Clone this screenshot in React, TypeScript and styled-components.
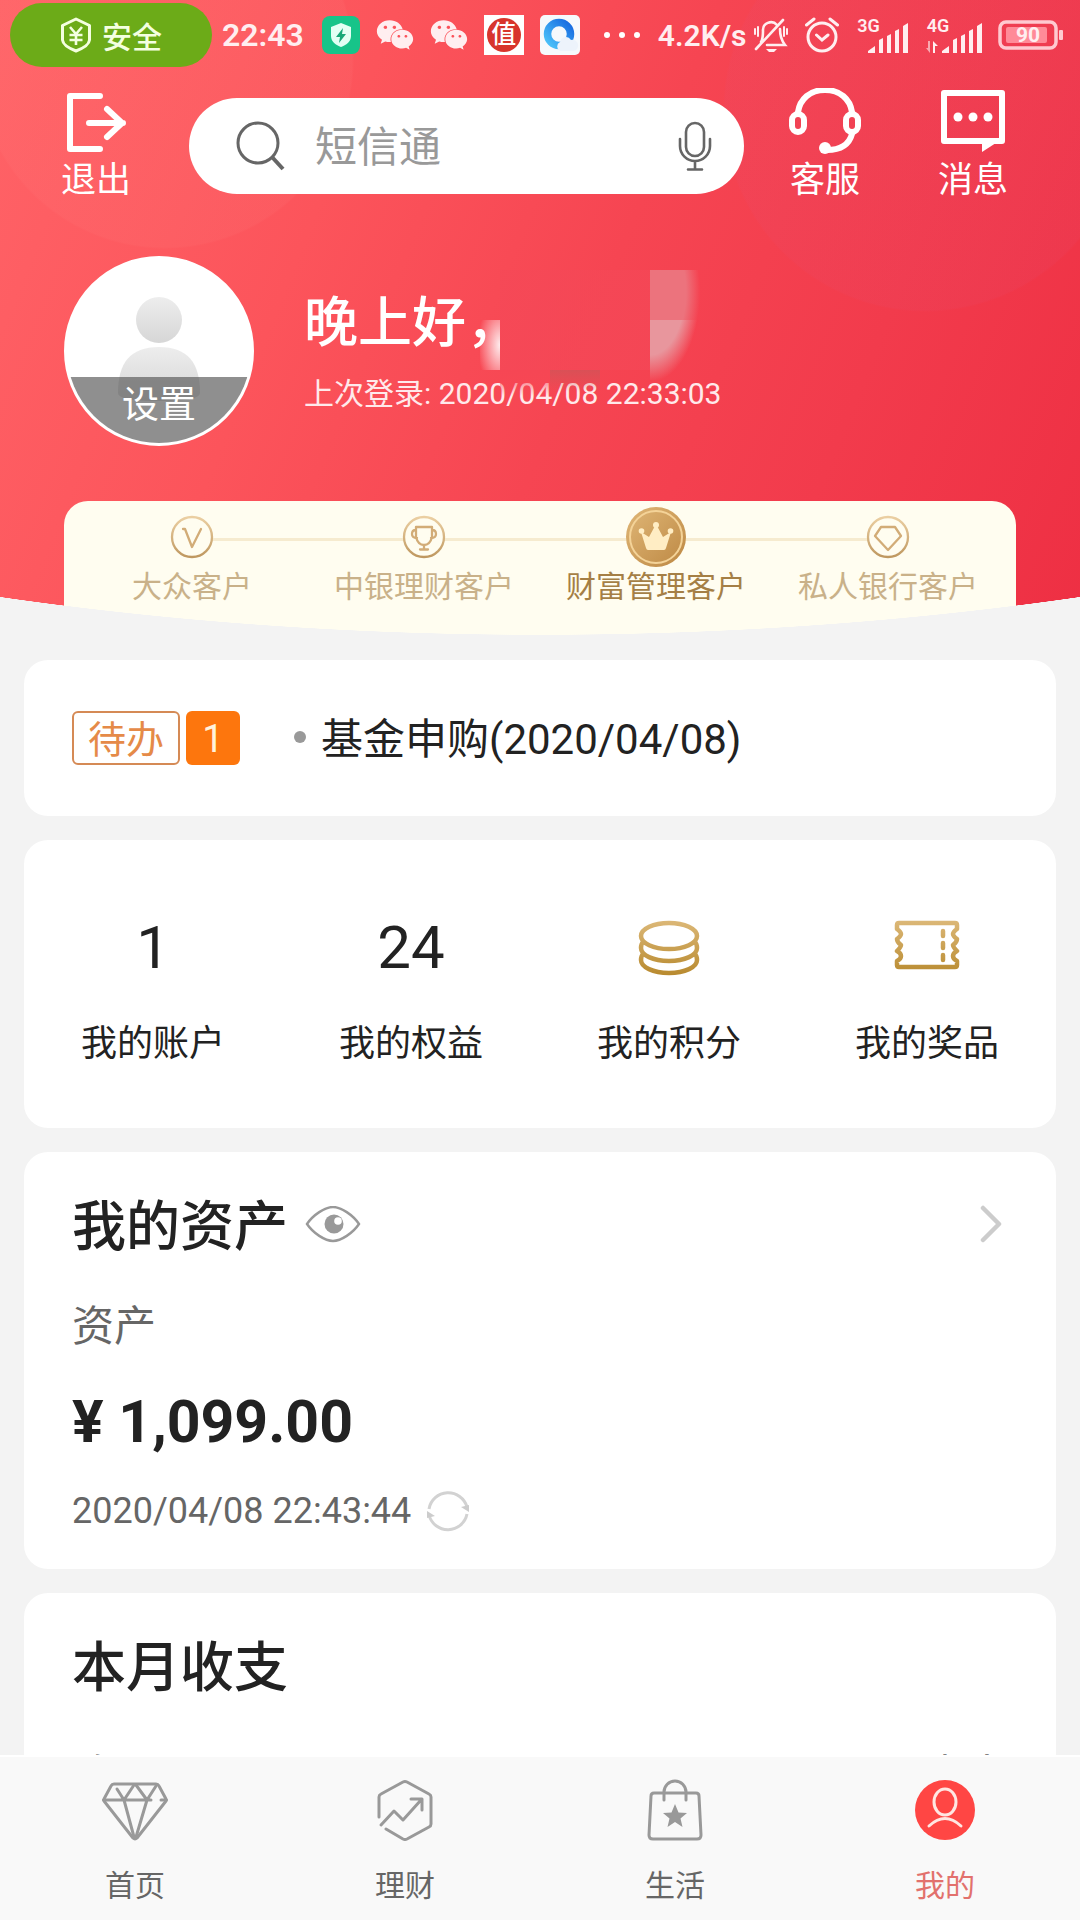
import React from "react";
import styled, { createGlobalStyle } from "styled-components";
import { FaWeixin } from "react-icons/fa";

const GlobalStyle = createGlobalStyle`
  * { box-sizing: border-box; }
  body {
    margin: 0;
    background: #f3f3f3;
    color: #222;
    font-family: Roboto, "Noto Sans CJK SC", sans-serif;
    -webkit-font-smoothing: antialiased;
  }
  button, input { font-family: inherit; }
  button { border: 0; padding: 0; background: none; color: inherit; cursor: pointer; }
  a { color: inherit; text-decoration: none; }
  h1, h2, p, ul { margin: 0; padding: 0; }
  li { list-style: none; }
  svg { display: block; flex: none; }
`;

const Screen = styled.div`
  height: 100vh;
  display: flex;
  flex-direction: column;
`;

const Scroller = styled.div`
  flex: 1;
  min-height: 0;
  overflow-y: auto;
  scrollbar-width: none;
`;

/* ---------- red header ---------- */

const Header = styled.header`
  position: relative;
  color: #fff;
  background:
    radial-gradient(circle at 165px 60px, rgba(255, 130, 130, 0.12) 187px, transparent 189px),
    radial-gradient(circle at 925px 110px, rgba(225, 80, 120, 0.12) 200px, transparent 202px),
    linear-gradient(112deg, #ff6367 0%, #fc545b 30%, #f64552 54%, #f23b4c 76%, #ee2f43 100%);

  /* curved lower edge in the page colour */
  &::after {
    content: "";
    position: absolute;
    inset: auto 0 0;
    height: 42px;
    z-index: 2;
    background: radial-gradient(147% 635px at 50% -593px, transparent calc(100% - 1px), #f3f3f3 100%);
  }
`;

const StatusBar = styled.div`
  height: 70px;
  padding: 0 16px 0 10px;
  display: flex;
  align-items: center;
  color: #ffeef0;
  font-size: 32px;
  font-weight: 600;
`;

const SafePill = styled.div`
  width: 202px;
  height: 64px;
  border-radius: 32px;
  background: #6cab18;
  color: #f4ffe0;
  display: flex;
  align-items: center;
  justify-content: center;
  gap: 10px;
  font-size: 30px;
  font-weight: 500;
`;

const Clock = styled.span`
  margin-left: 10px;
`;

const Speed = styled.span`
  font-size: 30px;
`;

const AppIcons = styled.div`
  margin-left: 18px;
  display: flex;
  align-items: center;
  gap: 16px;
`;

const DealIcon = styled.span`
  width: 40px;
  height: 40px;
  background: #fff;
  display: flex;
  align-items: center;
  justify-content: center;
`;

const DealDisc = styled.span`
  width: 34px;
  height: 34px;
  border-radius: 50%;
  background: #d8352c;
  color: #fff;
  font-size: 25px;
  line-height: 34px;
  font-weight: 500;
  text-align: center;
`;

const Dots = styled.span`
  display: flex;
  gap: 9px;
  margin: 0 18px 0 24px;
  i {
    width: 6px;
    height: 6px;
    border-radius: 50%;
    background: #fff;
  }
`;

const SystemIcons = styled.div`
  flex: 1;
  margin-left: 6px;
  display: flex;
  align-items: center;
  justify-content: space-between;
`;

const Signal = styled.span<{ $width: number }>`
  width: ${(p) => p.$width}px;
  height: 36px;
  position: relative;
  display: block;
  svg { position: absolute; right: 0; bottom: 0; }
`;

const NetLabel = styled.span`
  position: absolute;
  left: 2px;
  top: 0;
  font-size: 18px;
  line-height: 18px;
  font-weight: 600;
`;

const Battery = styled.span`
  position: relative;
  width: 66px;
  height: 30px;
  span {
    position: absolute;
    inset: 0 6px 0 0;
    text-align: center;
    font-size: 21px;
    line-height: 30px;
    font-weight: 700;
  }
`;

const TopRow = styled.div`
  display: flex;
  align-items: center;
  padding: 18px 71px 0 60px;
`;

const IconButton = styled.button`
  width: 72px;
  display: flex;
  flex-direction: column;
  align-items: center;
  color: #fff;
  font-size: 35px;
  line-height: 54px;
`;

const Actions = styled.div`
  display: flex;
  gap: 76px;
`;

const SearchBox = styled.label`
  flex: 1;
  min-width: 0;
  height: 96px;
  margin: 0 45px 4px 57px;
  padding: 0 32px 0 47px;
  border-radius: 48px;
  background: #fff;
  display: flex;
  align-items: center;
  gap: 29px;
`;

const SearchInput = styled.input`
  flex: 1;
  min-width: 0;
  border: 0;
  outline: 0;
  padding: 4px 0 0;
  background: none;
  font-size: 42px;
  line-height: 60px;
  color: #333;
  &::placeholder { color: #999; opacity: 1; }
`;

const Profile = styled.section`
  display: flex;
  align-items: center;
  gap: 50px;
  padding: 48px 64px 0;
`;

const Avatar = styled.button`
  position: relative;
  width: 190px;
  height: 190px;
  border-radius: 50%;
  border: 3px solid #fff;
  background: #fff;
  overflow: hidden;
  flex: none;
`;

const AvatarLabel = styled.span`
  position: absolute;
  inset: auto 0 0;
  height: 66px;
  background: rgba(90, 90, 90, 0.68);
  color: #fff;
  font-size: 37px;
  line-height: 58px;
`;

const Welcome = styled.div`
  position: relative;
  padding-top: 4px;
`;

const Greeting = styled.h1`
  font-size: 54px;
  line-height: 82px;
  font-weight: 500;
`;

const LastLogin = styled.p`
  font-size: 30px;
  line-height: 58px;
  color: #ffe9eb;
`;

/* Pixelated cover over the customer's name */
const NameMask = styled.span`
  position: absolute;
  left: 176px;
  top: -9px;
  width: 220px;
  height: 130px;
  background-repeat: no-repeat;
  background-image:
    radial-gradient(ellipse 28px 56px at 100% 50%, rgba(255, 255, 255, 0.9) 0%, transparent 80%),
    linear-gradient(rgba(205, 85, 88, 0.7), rgba(235, 70, 82, 0)),
    linear-gradient(#f64654, rgba(246, 70, 84, 0)),
    linear-gradient(rgba(244, 72, 88, 0.6), rgba(244, 72, 88, 0.6)),
    radial-gradient(ellipse 50px 90px at 0 22px, #ec737d 72%, transparent 100%),
    radial-gradient(ellipse 50px 90px at 0 -28px, #e8969d 70%, transparent 100%);
  background-size: 20px 50px, 50px 22px, 50px 26px, 150px 100px, 50px 50px, 50px 60px;
  background-position: 0 50px, 70px 100px, 20px 100px, 20px 0, 170px 0, 170px 50px;
`;

const TierCard = styled.ol`
  list-style: none;
  margin: 55px 64px 0;
  padding: 6px 12px 28px;
  border-radius: 24px 24px 0 0;
  background: #fffdf0;
  display: grid;
  grid-template-columns: repeat(4, 1fr);
`;

const Tier = styled.li<{ $active?: boolean }>`
  position: relative;
  display: flex;
  flex-direction: column;
  align-items: center;
  color: ${(p) => (p.$active ? "#a57f45" : "#c9b189")};
  font-size: 30px;
  line-height: 40px;
  white-space: nowrap;
  &:not(:first-child)::before {
    content: "";
    position: absolute;
    top: 31px;
    right: 50%;
    width: 100%;
    height: 3px;
    background: #f6ebcf;
  }
`;

const TierIcon = styled.span`
  height: 60px;
  position: relative;
  z-index: 1;
  display: flex;
  align-items: center;
`;

/* ---------- cards ---------- */

const Cards = styled.main`
  padding: 25px 24px;
  display: flex;
  flex-direction: column;
  gap: 24px;
`;

const Card = styled.section`
  background: #fff;
  border-radius: 24px;
  padding: 34px 48px;
`;

const TodoCard = styled(Card)`
  padding: 46px 48px;
  display: flex;
  align-items: center;
`;

const TodoTag = styled.span`
  height: 54px;
  width: 108px;
  border: 2px solid #d58a55;
  border-radius: 6px;
  color: #e58a48;
  font-size: 38px;
  line-height: 54px;
  text-align: center;
`;

const TodoCount = styled.span`
  width: 54px;
  height: 54px;
  margin-left: 6px;
  border-radius: 6px;
  background: #fd760d;
  color: #fff2dc;
  font-size: 38px;
  line-height: 56px;
  text-align: center;
`;

const TodoLink = styled.a`
  margin-left: 54px;
  padding-top: 4px;
  display: flex;
  align-items: center;
  gap: 15px;
  font-size: 42px;
  line-height: 60px;
  &::before {
    content: "";
    width: 12px;
    height: 12px;
    margin-bottom: 6px;
    border-radius: 50%;
    background: #999;
  }
`;

const StatCard = styled(Card)`
  padding: 74px 0 60px;
  display: grid;
  grid-template-columns: repeat(4, 1fr);
`;

const Stat = styled.a`
  display: flex;
  flex-direction: column;
  align-items: center;
  gap: 42px;
  font-size: 36px;
  line-height: 48px;
`;

const StatValue = styled.span`
  height: 64px;
  font-size: 60px;
  line-height: 68px;
`;

const TitleRow = styled.div`
  display: flex;
  align-items: center;
  justify-content: space-between;
`;

const TitleGroup = styled.div`
  display: flex;
  align-items: center;
  gap: 17px;
`;

const Title = styled.h2`
  padding-top: 6px;
  font-size: 54px;
  line-height: 72px;
  font-weight: 500;
`;

const Caption = styled.p`
  margin-top: 34px;
  font-size: 42px;
  line-height: 58px;
  color: #666;
`;

const Amount = styled.p`
  margin-top: 30px;
  font-size: 59px;
  line-height: 72px;
  font-weight: 700;
`;

const Updated = styled.div`
  margin-top: 29px;
  display: flex;
  align-items: center;
  gap: 16px;
  font-size: 36px;
  line-height: 48px;
  color: #666;
`;

const FlowRow = styled.div`
  margin-top: 42px;
  display: flex;
  justify-content: space-between;
  font-size: 42px;
  line-height: 58px;
  color: #666;
`;

/* ---------- tab bar ---------- */

const TabBar = styled.nav`
  height: 165px;
  flex: none;
  border-top: 2px solid #fff;
  background: #f9f9f9;
  display: grid;
  grid-template-columns: repeat(4, 1fr);
`;

const Tab = styled.a<{ $active?: boolean }>`
  padding-top: 22px;
  display: flex;
  flex-direction: column;
  align-items: center;
  gap: 23px;
  font-size: 30px;
  line-height: 44px;
  color: ${(p) => (p.$active ? "#e2716d" : "#666")};
`;

/* ---------- drawings ---------- */

const ShieldYen = () => (
  <svg width="32" height="36" viewBox="0 0 32 36" fill="none" stroke="currentColor" strokeWidth="3">
    <path d="M16 2 29.5 8.500V23Q29 29 16 34Q3 29 2.500 23V8.500Z" strokeLinejoin="round" />
    <path d="M10 10l6 7 6-7M16 17v11M9.500 18h13M9.500 23h13" strokeWidth="2.600" />
  </svg>
);

const GuardApp = () => (
  <svg width="38" height="38" viewBox="0 0 38 38">
    <rect width="38" height="38" rx="8" fill="#17c489" />
    <path d="M19 7l10 4v9c0 6-5 9-10 11C14 29 9 26 9 20v-9z" fill="#e3fff4" />
    <path d="M21 12l-7 9h4l-1 6 7-9h-4z" fill="#17a878" />
  </svg>
);

const BrowserApp = () => (
  <svg width="40" height="40" viewBox="0 0 40 40">
    <defs>
      <linearGradient id="qb" x1="0" y1="1" x2="1" y2="0">
        <stop offset="0" stopColor="#4cc4fa" />
        <stop offset="1" stopColor="#1769e0" />
      </linearGradient>
    </defs>
    <rect width="40" height="40" rx="5" fill="#f6f9fc" />
    <circle cx="19" cy="19" r="11.500" fill="none" stroke="url(#qb)" strokeWidth="7.500" />
    <path d="M20 36a5 5 0 0 1 0-9 6 6 0 0 1 11-2 5.500 5.500 0 0 1 3 11z" fill="#edf3fb" />
  </svg>
);

const MutedBell = () => (
  <svg width="36" height="36" viewBox="0 0 36 36" fill="none" stroke="currentColor" strokeWidth="2.600" strokeLinecap="round">
    <path d="M8 25c2-3 2-6 2-11a8 8 0 0 1 14-6M27 12c0 7 1 11 5 16H14M3 32 30 3" />
    <path d="M2 12v5M5 10v9M34 12v5M31 10v9" strokeWidth="2" />
    <path d="M13 32h11l-3 3h-5z" fill="currentColor" stroke="none" />
  </svg>
);

const AlarmClock = () => (
  <svg width="36" height="36" viewBox="0 0 36 36" fill="none" stroke="currentColor" strokeWidth="3" strokeLinecap="round">
    <circle cx="18" cy="20" r="14" />
    <path d="M12.500 18l5.500 5 6-5M2.500 8 10 2M33.500 8 26 2" />
  </svg>
);

const SignalBars = () => (
  <svg width="42" height="30" viewBox="0 0 42 30" fill="currentColor">
    <path d="M1 30v-2l7-5v7zM12 17l4-2v15h-4zM20 13l4-2v19h-4zM28 8l4-2v24h-4zM36 3l5-3v30h-5z" />
  </svg>
);

const DataSignal = () => (
  <svg width="58" height="30" viewBox="0 0 58 30" fill="currentColor">
    <path d="M17 30v-2l7-5v7zM28 17l4-2v15h-4zM36 13l4-2v19h-4zM44 8l4-2v24h-4zM52 3l5-3v30h-5z" />
    <path d="M5 18v12l-4-5h2v-7z" opacity=".6" />
    <path d="M8 30V18l5 5h-3v7z" />
  </svg>
);

const BatteryShape = () => (
  <svg width="66" height="30" viewBox="0 0 66 30">
    <rect x="2" y="2" width="56" height="26" rx="6" fill="none" stroke="#ffc9d0" strokeWidth="3.500" />
    <rect x="8" y="7" width="41" height="16" rx="2" fill="#ff8b98" />
    <rect x="61" y="10" width="4" height="10" rx="1" fill="#ffc9d0" />
  </svg>
);

const ExitIcon = () => (
  <svg width="66" height="66" viewBox="0 0 66 66" fill="none" stroke="currentColor" strokeWidth="6" strokeLinecap="round" strokeLinejoin="round">
    <path d="M37 8H7v53h30" />
    <path d="M26 35h34M44 21l15 14-15 14" />
  </svg>
);

const HeadsetIcon = () => (
  <svg width="72" height="66" viewBox="0 0 72 66" fill="none" stroke="currentColor" strokeWidth="6" strokeLinecap="round">
    <path d="M9 24C11 11 21 2 36 2s25 9 27 22" />
    <rect x="3" y="26" width="12" height="18" rx="6" />
    <rect x="57" y="26" width="12" height="18" rx="6" />
    <path d="M63 46c-3 11-12 16-25 16" />
    <circle cx="36" cy="60" r="6" fill="currentColor" stroke="none" />
  </svg>
);

const MessageIcon = () => (
  <svg width="72" height="66" viewBox="0 0 72 66" fill="none" stroke="currentColor" strokeWidth="6" strokeLinejoin="round">
    <path d="M7 5h58v48H7z" />
    <path d="M45 52v12l17-11z" fill="currentColor" stroke="none" />
    <g fill="currentColor" stroke="none">
      <circle cx="21" cy="29" r="4.500" />
      <circle cx="36" cy="29" r="4.500" />
      <circle cx="51" cy="29" r="4.500" />
    </g>
  </svg>
);

const SearchIcon = () => (
  <svg width="50" height="50" viewBox="0 0 50 50" fill="none" stroke="#666" strokeWidth="3">
    <circle cx="22" cy="22" r="20" />
    <path d="M36 36l11 12" strokeWidth="4" />
  </svg>
);

const MicIcon = () => (
  <svg width="34" height="50" viewBox="0 0 34 50" fill="none" stroke="#666" strokeWidth="2.600" strokeLinecap="round">
    <rect x="8" y="2" width="18" height="33" rx="9" />
    <path d="M2 18v7a15 15 0 0 0 30 0v-7M17 40v8M10 48.500h14" />
  </svg>
);

const Person = () => (
  <svg width="184" height="184" viewBox="0 0 184 184">
    <defs>
      <linearGradient id="person" x1="0" y1="0" x2="0" y2="1">
        <stop offset="0" stopColor="#ededed" />
        <stop offset="1" stopColor="#d6d6d6" />
      </linearGradient>
    </defs>
    <circle cx="92" cy="61" r="23" fill="url(#person)" />
    <path d="M51 134c0-30 12-46 41-46s41 16 41 46q0 8-41 8t-41-8z" fill="url(#person)" />
  </svg>
);

const GoldDefs = () => (
  <defs>
    <linearGradient id="paleGold" x1="0" y1="0" x2="0" y2="1">
      <stop offset="0" stopColor="#ebcfa2" />
      <stop offset="1" stopColor="#bf9860" />
    </linearGradient>
    <linearGradient id="gold" gradientUnits="userSpaceOnUse" x1="0" y1="6" x2="0" y2="60">
      <stop offset="0" stopColor="#dcb878" />
      <stop offset="1" stopColor="#b98b30" />
    </linearGradient>
    <linearGradient id="coin" x1="0" y1="0" x2="1" y2="1">
      <stop offset="0" stopColor="#e0b777" />
      <stop offset="1" stopColor="#bd8843" />
    </linearGradient>
  </defs>
);

const TierRing = ({ children }: { children: React.ReactNode }) => (
  <svg width="44" height="44" viewBox="0 0 44 44" fill="none" stroke="#d2ac77" strokeWidth="2.300" strokeLinecap="round" strokeLinejoin="round">
    <GoldDefs />
    <circle cx="22" cy="22" r="20" fill="#fffdf0" stroke="url(#paleGold)" />
    {children}
  </svg>
);

const CrownCoin = () => (
  <svg width="60" height="60" viewBox="0 0 60 60">
    <GoldDefs />
    <circle cx="30" cy="30" r="30" fill="url(#coin)" />
    <circle cx="30" cy="30" r="26" fill="none" stroke="#f4d398" strokeWidth="2" />
    <g fill="#ffedc4">
      <path d="M15 25l8 5 7-13 7 13 8-5-5 16q-.5 2-2 2H22q-1.500 0-2-2z" />
      <circle cx="30" cy="18" r="3" />
      <circle cx="15.500" cy="24" r="2.800" />
      <circle cx="44.500" cy="24" r="2.800" />
    </g>
  </svg>
);

const CoinsIcon = () => (
  <svg width="64" height="64" viewBox="0 0 64 64" fill="none" stroke="url(#gold)" strokeWidth="4.500">
    <ellipse cx="32" cy="22" rx="28" ry="13" />
    <path d="M6 28Q4 30 4 34c0 7 12 13 28 13s28-6 28-13q0-4-2-6" />
    <path d="M6 40Q4 42 4 46c0 7 12 13 28 13s28-6 28-13q0-4-2-6" />
  </svg>
);

const TicketIcon = () => (
  <svg width="66" height="64" viewBox="0 0 66 64" fill="none" stroke="url(#gold)" strokeWidth="4.500" strokeLinejoin="round">
    <path d="M5 9h56q2 0 2 2v4q-4 3-4 5t4 5q0 3-4 6 0 2 4 6-4 2-4 5t4 5v4q0 2-2 2H5q-2 0-2-2v-4q4-2 4-5t-4-5q4-4 4-6-4-3-4-6 4-3 4-5t-4-5v-4q0-2 2-2z" />
    <path d="M49 17v5M49 29v5M49 41v5" strokeLinecap="round" />
  </svg>
);

const EyeIcon = () => (
  <svg width="56" height="38" viewBox="0 0 56 38">
    <path d="M2 18C8 9 20 1 28 1s20 8 26 17c-6 9-18 17-26 17S8 27 2 18z" fill="none" stroke="#999" strokeWidth="2.400" />
    <circle cx="29" cy="18" r="9.500" fill="#999" />
    <circle cx="33" cy="15" r="3.800" fill="#fff" />
  </svg>
);

const ChevronIcon = () => (
  <svg width="30" height="40" viewBox="0 0 30 40" fill="none" stroke="#ccc" strokeWidth="4.500" strokeLinecap="round" strokeLinejoin="round">
    <path d="M5 3l16 16L5 35" />
  </svg>
);

const RefreshIcon = () => (
  <svg width="42" height="44" viewBox="0 0 42 44" fill="none" stroke="#d2d2d2" strokeWidth="3">
    <path d="M2 20a19.500 19.500 0 0 1 38-2M40 25a19.500 19.500 0 0 1-38 1" />
    <path d="M34 18l8-2v7zM8 27l-8-5v7z" fill="#ccc" stroke="none" />
  </svg>
);

const tabStroke = { fill: "none", stroke: "#999", strokeWidth: 3, strokeLinecap: "round", strokeLinejoin: "round" } as const;

const DiamondTab = () => (
  <svg width="66" height="62" viewBox="0 0 66 62" {...tabStroke}>
    <path d="M12 5h42q2 0 3 2l7 13q1 1 0 2L35 59q-2 2-4 0L2 22q-1-1 0-2L9 7q1-2 3-2z" />
    <path d="M3 21h46M59 21h5M15 10l7 11 10-15M34 6l11 15 9-14M22 21l10 37M45 21 34 58" />
  </svg>
);

const WealthTab = () => (
  <svg width="56" height="62" viewBox="0 0 56 62" {...tabStroke}>
    <path d="M2 38V18q0-2 2-3L26 3q2-1 4 0l22 12q2 1 2 3v27q0 2-2 3L30 60q-2 1-4 0L9 50" />
    <path d="M4 46l13-14 9 9 18-20M34 20h11v11" />
  </svg>
);

const LifeTab = () => (
  <svg width="56" height="62" viewBox="0 0 56 62" {...tabStroke}>
    <path d="M7 14h42q3 0 3 3l2 39q0 4-4 4H6q-4 0-4-4l2-39q0-3 3-3z" />
    <path d="M17 21v-8a11 11 0 0 1 22 0v8" />
    <path d="M28 25l3.500 8.500 8.500.5-6.500 5.500 2 8.500-7.500-5-7.500 5 2-8.500L16 34l8.500-.5z" fill="#999" stroke="none" />
  </svg>
);

const MineTab = () => (
  <svg width="62" height="62" viewBox="0 0 62 62">
    <circle cx="31" cy="31" r="30" fill="#ff4644" />
    <g fill="none" stroke="#ffe6e2" strokeWidth="3" strokeLinecap="round">
      <ellipse cx="31" cy="23" rx="11" ry="13" />
      <path d="M15 47q16-15 32 0" />
    </g>
  </svg>
);

/* ---------- data ---------- */

const tiers = [
  { name: "大众客户", icon: <TierRing><path d="M13 14h2l7 18 9-18" /></TierRing> },
  {
    name: "中银理财客户",
    icon: (
      <TierRing>
        <path d="M14 12h16v10q-2 8-8 8t-8-8zM14 15q-4 0-4 4t5 4M30 15q4 0 4 4t-5 4M22 30v4M18 34.500h8" />
      </TierRing>
    ),
  },
  { name: "财富管理客户", icon: <CrownCoin />, active: true },
  { name: "私人银行客户", icon: <TierRing><path d="M15 12h14l6 9-13 14L9 21z" /></TierRing> },
];

const stats = [
  { label: "我的账户", value: "1" },
  { label: "我的权益", value: "24" },
  { label: "我的积分", value: <CoinsIcon /> },
  { label: "我的奖品", value: <TicketIcon /> },
];

const tabs = [
  { label: "首页", icon: <DiamondTab /> },
  { label: "理财", icon: <WealthTab /> },
  { label: "生活", icon: <LifeTab /> },
  { label: "我的", icon: <MineTab />, active: true },
];

export default function App() {
  return (
    <Screen>
      <GlobalStyle />
      <Scroller>
        <Header>
          <StatusBar>
            <SafePill>
              <ShieldYen />
              安全
            </SafePill>
            <Clock>22:43</Clock>
            <AppIcons>
              <GuardApp />
              <FaWeixin size={38} />
              <FaWeixin size={38} />
              <DealIcon>
                <DealDisc>值</DealDisc>
              </DealIcon>
              <BrowserApp />
            </AppIcons>
            <Dots>
              <i />
              <i />
              <i />
            </Dots>
            <Speed>4.2K/s</Speed>
            <SystemIcons>
              <MutedBell />
              <AlarmClock />
              <Signal $width={54}>
                <NetLabel>3G</NetLabel>
                <SignalBars />
              </Signal>
              <Signal $width={58}>
                <NetLabel>4G</NetLabel>
                <DataSignal />
              </Signal>
              <Battery>
                <BatteryShape />
                <span>90</span>
              </Battery>
            </SystemIcons>
          </StatusBar>

          <TopRow>
            <IconButton type="button">
              <ExitIcon />
              退出
            </IconButton>
            <SearchBox>
              <SearchIcon />
              <SearchInput type="text" aria-label="搜索" placeholder="短信通" />
              <MicIcon />
            </SearchBox>
            <Actions>
              <IconButton type="button">
                <HeadsetIcon />
                客服
              </IconButton>
              <IconButton type="button">
                <MessageIcon />
                消息
              </IconButton>
            </Actions>
          </TopRow>

          <Profile>
            <Avatar type="button">
              <Person />
              <AvatarLabel>设置</AvatarLabel>
            </Avatar>
            <Welcome>
              <Greeting>晚上好，</Greeting>
              <LastLogin>上次登录: 2020/04/08 22:33:03</LastLogin>
              <NameMask aria-hidden="true" />
            </Welcome>
          </Profile>

          <TierCard>
            {tiers.map((t) => (
              <Tier key={t.name} $active={t.active}>
                <TierIcon>{t.icon}</TierIcon>
                {t.name}
              </Tier>
            ))}
          </TierCard>
        </Header>

        <Cards>
          <TodoCard>
            <TodoTag>待办</TodoTag>
            <TodoCount>1</TodoCount>
            <TodoLink href="#todo">基金申购(2020/04/08)</TodoLink>
          </TodoCard>

          <StatCard>
            {stats.map((s) => (
              <Stat key={s.label} href="#stats">
                <StatValue>{s.value}</StatValue>
                {s.label}
              </Stat>
            ))}
          </StatCard>

          <Card>
            <TitleRow>
              <TitleGroup>
                <Title>我的资产</Title>
                <button type="button" aria-label="显示或隐藏金额">
                  <EyeIcon />
                </button>
              </TitleGroup>
              <a href="#assets" aria-label="资产详情">
                <ChevronIcon />
              </a>
            </TitleRow>
            <Caption>资产</Caption>
            <Amount>¥ 1,099.00</Amount>
            <Updated>
              2020/04/08 22:43:44
              <button type="button" aria-label="刷新">
                <RefreshIcon />
              </button>
            </Updated>
          </Card>

          <Card>
            <Title>本月收支</Title>
            <FlowRow>
              <span>收入</span>
              <span>支出</span>
            </FlowRow>
          </Card>
        </Cards>
      </Scroller>

      <TabBar>
        {tabs.map((t) => (
          <Tab key={t.label} href="#tab" $active={t.active} aria-current={t.active ? "page" : undefined}>
            {t.icon}
            {t.label}
          </Tab>
        ))}
      </TabBar>
    </Screen>
  );
}
